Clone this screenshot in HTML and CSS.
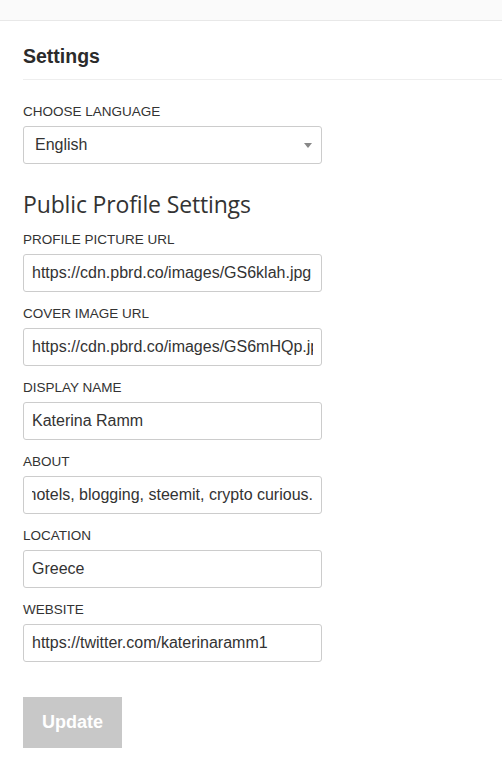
FILE: index.html
```html
<!DOCTYPE html>
<html lang="en">
<head>
<meta charset="utf-8">
<title>Settings</title>
<link rel="stylesheet" href="styles.css">
</head>
<body>
<div class="topbar"></div>
<main class="page">
  <h2 class="page-title">Settings</h2>
  <form class="settings-form">
    <div class="field">
      <label class="field-label">Choose Language</label>
      <div class="select">
        <span class="select-value">English</span>
        <span class="select-arrow"></span>
      </div>
    </div>
    <h3 class="section-title">Public Profile Settings</h3>
    <div class="field">
      <label class="field-label">Profile picture url</label>
      <div class="input"><span class="input-text">https://cdn.pbrd.co/images/GS6klah.jpg</span></div>
    </div>
    <div class="field">
      <label class="field-label">Cover image url</label>
      <div class="input"><span class="input-text">https://cdn.pbrd.co/images/GS6mHQp.jpg</span></div>
    </div>
    <div class="field">
      <label class="field-label">Display name</label>
      <div class="input"><span class="input-text">Katerina Ramm</span></div>
    </div>
    <div class="field">
      <label class="field-label">About</label>
      <div class="input"><span class="input-text input-text-end"><span>Love hotels, blogging, steemit, crypto curious.</span></span></div>
    </div>
    <div class="field">
      <label class="field-label">Location</label>
      <div class="input"><span class="input-text">Greece</span></div>
    </div>
    <div class="field">
      <label class="field-label">Website</label>
      <div class="input"><span class="input-text">https://twitter.com/katerinaramm1</span></div>
    </div>
    <button type="button" class="btn-update">Update</button>
  </form>
</main>
</body>
</html>
```

FILE: styles.css
```css
* { box-sizing: border-box; }

html, body {
  margin: 0;
  padding: 0;
  background: #ffffff;
}

body {
  font-family: "Liberation Sans", Arial, sans-serif;
  color: #333333;
  width: 502px;
  height: 760px;
  overflow: hidden;
}

.topbar {
  height: 21px;
  background: #fafafa;
  border-bottom: 1px solid #e8e8e8;
}

.page {
  padding-left: 23px;
}

.page-title {
  margin: 24px 0 0 0;
  padding-bottom: 11px;
  font-size: 19.5px;
  line-height: 23px;
  font-weight: bold;
  color: #2b2b2b;
  border-bottom: 1px solid #eeeeee;
}

.settings-form {
  display: flex;
  flex-direction: column;
  padding-top: 24px;
}

.field {
  display: flex;
  flex-direction: column;
  margin-bottom: 14px;
}

.field-label {
  font-size: 13.5px;
  line-height: 16px;
  text-transform: uppercase;
  color: #333333;
  margin-bottom: 6px;
}

.select,
.input {
  width: 299px;
  height: 38px;
  border: 1px solid #cccccc;
  border-radius: 3px;
  background: #ffffff;
  font-size: 16px;
  line-height: 36px;
  color: #333333;
  padding: 0 8px;
}

.input-text {
  display: block;
  overflow: hidden;
  white-space: nowrap;
}

.input-text-end {
  display: flex;
  justify-content: flex-end;
}

.input-text-end > span {
  flex: none;
}

.select {
  display: flex;
  align-items: center;
  justify-content: space-between;
  padding: 0 8px 0 11px;
}

.select-arrow {
  width: 0;
  height: 0;
  border-left: 4px solid transparent;
  border-right: 4px solid transparent;
  border-top: 5px solid #888888;
  margin-right: 1px;
}

.section-title {
  margin: 10px 0 12px 0;
  font-family: "Open Sans", "Noto Sans", sans-serif;
  font-weight: normal;
  font-size: 23px;
  letter-spacing: -0.15px;
  line-height: 32px;
  color: #333333;
}

.btn-update {
  align-self: flex-start;
  margin-top: 21px;
  width: 99px;
  height: 51px;
  border: none;
  border-radius: 0;
  background: #c8c8c8;
  color: #ffffff;
  font-family: "Liberation Sans", Arial, sans-serif;
  font-weight: bold;
  font-size: 18px;
  padding: 0;
}
```
